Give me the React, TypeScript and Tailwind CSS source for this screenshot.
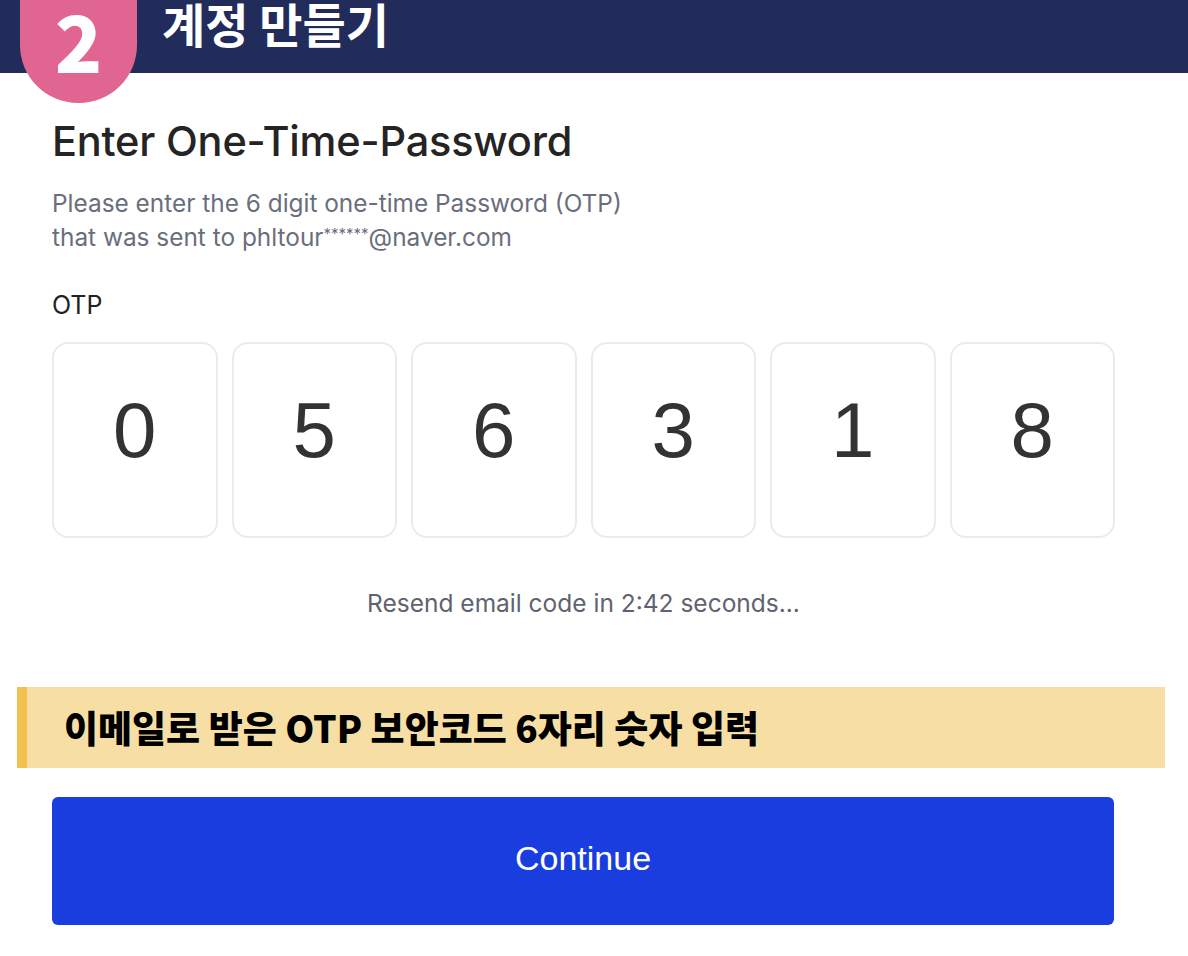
const digits = ['0', '5', '6', '3', '1', '8'];

export default function App() {
  return (
    <div className="w-[1188px] h-[956px] bg-white overflow-hidden relative" style={{ fontFamily: 'Inter, "Noto Sans CJK KR", sans-serif' }}>
      {/* Header bar */}
      <div className="h-[73px] bg-[#222c5a] flex items-start">
        <div className="w-[162px] shrink-0" />
        <h2 className="text-white text-[47px] font-bold leading-[46px]" style={{ fontFamily: '"Noto Sans CJK KR", sans-serif' }}>
          계정 만들기
        </h2>
      </div>
      {/* Step badge */}
      <div className="absolute left-[20px] top-0 w-[117px] h-[103px] bg-[#e06591] rounded-b-[58px] flex justify-center">
        <span className="text-white text-[78px] font-black leading-[78px]" style={{ fontFamily: '"Noto Sans CJK KR", sans-serif' }}>
          2
        </span>
      </div>

      <div className="px-[52px] pr-[73px]">
        <h1 className="mt-[46px] text-[41.5px] font-medium text-[#242424] leading-[44px] tracking-[-0.2px]">
          Enter One-Time-Password
        </h1>
        <p className="mt-[23px] text-[24.4px] leading-[34px] text-[#6a6e7c]">
          Please enter the 6 digit one-time Password (OTP)
          <br />
          that was sent to phltour<sup className="text-[15px]">******</sup>@naver.com
        </p>
        <div className="mt-[34px] text-[25px] text-[#222] leading-[34px]">OTP</div>

        <div className="mt-[20px] flex gap-[14px]">
          {digits.map((d, i) => (
            <div
              key={i}
              className="flex-1 h-[196px] rounded-[16px] border-2 border-[#ebebeb] flex items-center justify-center pb-[20px]"
            >
              <span className="text-[78px] text-[#333] leading-none" style={{ fontFamily: '"Liberation Sans", Arial, sans-serif' }}>
                {d}
              </span>
            </div>
          ))}
        </div>

        <div className="mt-[48px] text-center text-[24.5px] text-[#5f6370] leading-[34px]">
          Resend email code in 2:42 seconds...
        </div>
      </div>

      {/* Note banner */}
      <div className="mt-[67px] ml-[17px] w-[1148px] h-[81px] bg-[#f6dea5] border-l-[10px] border-[#f2c04f] flex items-center pl-[37px]">
        <span className="text-[37px] font-black text-black" style={{ fontFamily: '"Noto Sans CJK KR", sans-serif' }}>
          이메일로 받은 OTP 보안코드 6자리 숫자 입력
        </span>
      </div>

      <div className="px-[52px] pr-[74px] mt-[29px]">
        <button className="w-full h-[128px] rounded-[6px] bg-[#1a3ddf] text-white text-[34px] pb-[6px]" style={{ fontFamily: '"Liberation Sans", Arial, sans-serif' }}>
          Continue
        </button>
      </div>
    </div>
  );
}
